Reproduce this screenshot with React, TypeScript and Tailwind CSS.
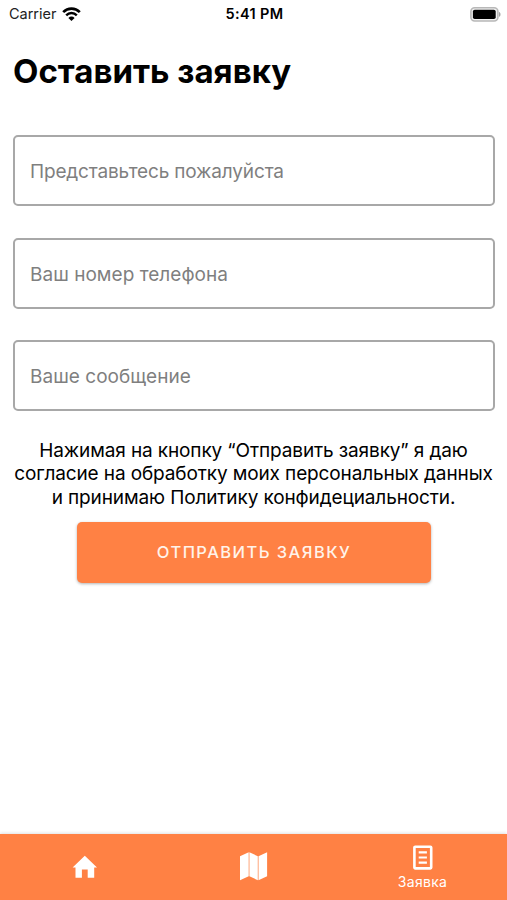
const FIELDS = [
  { name: "name", placeholder: "Представьтесь пожалуйста", spacing: "tracking-[-0.16px]" },
  { name: "phone", placeholder: "Ваш номер телефона", spacing: "tracking-[0.03px]" },
  { name: "message", placeholder: "Ваше сообщение", spacing: "tracking-[0.03px]" },
];

function WifiIcon() {
  return (
    <svg width="19" height="14" viewBox="0 0 19 14" fill="none" stroke="black">
      <path d="M1.2 5.1A11.8 11.8 0 0 1 17.8 5.1" strokeWidth="2.7" />
      <path d="M4.2 8.3A7.4 7.4 0 0 1 14.8 8.3" strokeWidth="2.4" />
      <path d="M9.5 13.9L6.4 10.9A4.4 4.4 0 0 1 12.6 10.9Z" fill="black" stroke="none" />
    </svg>
  );
}

function BatteryIcon() {
  return (
    <svg width="31" height="15" viewBox="0 0 31 15">
      <rect x="0.9" y="0.8" width="27" height="13.2" rx="3.8" fill="#f2f2f2" stroke="#b8b8b8" strokeWidth="1.6" />
      <rect x="2.9" y="2.8" width="22.8" height="9.2" rx="1.8" fill="black" />
      <path d="M29 5C31 5.6 31 9.2 29 9.8Z" fill="#a3a3a3" />
    </svg>
  );
}

function HomeIcon() {
  return (
    <svg width="26" height="24" viewBox="0 0 26 24" fill="white">
      <path d="M12.8 0.8L25 12.4H22.2V22.8H15.7V14.6H9.9V22.8H3.5V12.4H0.6Z" />
    </svg>
  );
}

function MapIcon() {
  return (
    <svg width="28" height="29" viewBox="0 0 28 29" fill="white">
      <path d="M0 4.2L8.7 0.2V24.2L0 28.2Z" />
      <path d="M9.4 0.2L17.8 4.2V28.2L9.4 24.2Z" />
      <path d="M18.5 4.2L27.1 0.2V24.2L18.5 28.2Z" />
    </svg>
  );
}

function FormIcon() {
  return (
    <svg width="20" height="25" viewBox="0 0 20 25" fill="none" stroke="white">
      <rect x="1.4" y="1.8" width="16.8" height="21.6" rx="0.8" strokeWidth="2.6" />
      <path d="M5.7 7.4H13.9M5.7 12.5H13.9M5.7 17.6H13.9" strokeWidth="2.2" />
    </svg>
  );
}

function StatusBar() {
  return (
    <div className="grid h-7 grid-cols-3 items-center pr-[6px] pl-[9px] text-[14.5px] text-black">
      <div className="flex items-center gap-[6px]">
        <span className="tracking-[-0.03px] text-[#222]">Carrier</span>
        <WifiIcon />
      </div>
      <span className="pr-px text-center font-semibold tracking-[0.35px]">5:41 PM</span>
      <div className="flex justify-end">
        <BatteryIcon />
      </div>
    </div>
  );
}

function TabBar() {
  return (
    <nav className="grid h-[66px] grid-cols-3 bg-[#ff8144] text-white shadow-[0_-1px_3px_rgba(0,0,0,0.12)]">
      <button className="flex items-center justify-center">
        <HomeIcon />
      </button>
      <button className="flex items-center justify-center pb-0.5">
        <MapIcon />
      </button>
      <button className="flex flex-col items-center pt-[11px]">
        <FormIcon />
        <span className="mt-[2px] text-[14px] leading-5 tracking-[0.3px]">Заявка</span>
      </button>
    </nav>
  );
}

export default function App() {
  return (
    <div className="flex h-[900px] w-[507px] flex-col overflow-hidden bg-white font-['Inter',sans-serif]">
      <StatusBar />
      <main className="flex flex-1 flex-col px-[13px]">
        <h1 className="mt-[22px] text-[33px] leading-[42px] font-bold text-black">Оставить заявку</h1>
        <form className="mt-[43px] flex flex-col">
          <div className="flex flex-col gap-[31.5px]">
            {FIELDS.map((field) => (
              <input
                key={field.name}
                name={field.name}
                placeholder={field.placeholder}
                className={`h-[71px] w-[482px] rounded-[5px] border-2 border-[#a8a8a8] px-[15px] pt-0.5 text-[19px] placeholder:text-[#7f7f7f] ${field.spacing}`}
              />
            ))}
          </div>
          <p className="mt-[28px] text-center text-[19px] leading-[23.3px] tracking-[-0.12px] whitespace-nowrap text-black">
            Нажимая на кнопку “Отправить заявку” я даю
            <br />
            согласие на обработку моих персональных данных
            <br />и принимаю Политику конфидециальности.
          </p>
          <button
            type="button"
            className="mt-[13.5px] ml-px h-[61px] w-[354px] self-center rounded-[5px] bg-[#ff8144] pb-px text-[16.5px] font-medium tracking-[1.45px] text-[#fff3ea] shadow-[0_1px_3px_rgba(0,0,0,0.3)]"
          >
            ОТПРАВИТЬ ЗАЯВКУ
          </button>
        </form>
      </main>
      <TabBar />
    </div>
  );
}
